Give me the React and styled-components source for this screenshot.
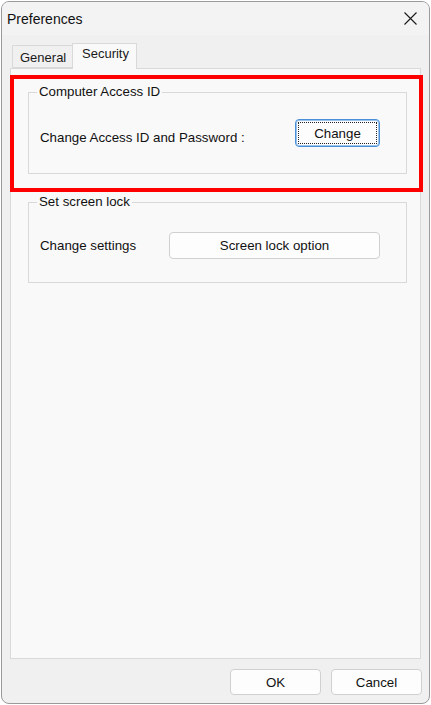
import React from 'react';
import styled, { createGlobalStyle } from 'styled-components';

const App = () => {
    return (
        <>
            <GlobalStyle />
            <Window>
                <TitleBar>
                    <Title>Preferences</Title>
                    <CloseButton aria-label="Close">
                        <svg width="13" height="13" viewBox="0 0 13 13">
                            <path d="M0.5 0.5 L12.5 12.5 M12.5 0.5 L0.5 12.5" stroke="#1a1a1a" strokeWidth="1.1" fill="none" />
                        </svg>
                    </CloseButton>
                </TitleBar>
                <Body>
                    <TabRow>
                        <Tab>General</Tab>
                        <Tab $active>Security</Tab>
                    </TabRow>
                    <Panel>
                        <Highlight>
                            <GroupBox $bottom={26}>
                                <Legend>Computer Access ID</Legend>
                                <Row $top={19}>
                                    <Label $shift={8}>Change Access ID and Password :</Label>
                                    <Button $width={85} $height={28} $focused>
                                        <FocusRing>Change</FocusRing>
                                    </Button>
                                </Row>
                            </GroupBox>
                        </Highlight>
                        <GroupBox $gap={2} $bottom={23}>
                            <Legend>Set screen lock</Legend>
                            <Row $top={22}>
                                <Label>Change settings</Label>
                                <Button $width={211} $height={27}>Screen lock option</Button>
                            </Row>
                        </GroupBox>
                    </Panel>
                    <Footer>
                        <Button $width={91} $height={26}>OK</Button>
                        <Button $width={91} $height={26}>Cancel</Button>
                    </Footer>
                </Body>
            </Window>
        </>
    );
};

export default App;

// Styled components
const GlobalStyle = createGlobalStyle`
    * {
        box-sizing: border-box;
    }
    body {
        margin: 0;
        padding: 1px 0 0 1px;
        background: #ffffff;
        font-family: 'Liberation Sans', Arial, sans-serif;
        color: #000;
    }
`;

const Window = styled.div`
    width: 429px;
    height: 703px;
    border: 1px solid #9a9a9a;
    border-radius: 8px;
    background: #f0f0f0;
    display: flex;
    flex-direction: column;
    overflow: hidden;
`;

const TitleBar = styled.div`
    height: 33px;
    display: flex;
    align-items: center;
    justify-content: space-between;
    padding-left: 5px;
    background: #f3f3f3;
`;

const Title = styled.div`
    font-size: 14px;
    color: #111;
`;

const CloseButton = styled.div`
    width: 38px;
    height: 33px;
    display: flex;
    align-items: center;
    justify-content: center;
`;

const Body = styled.div`
    flex: 1;
    display: flex;
    flex-direction: column;
    padding-top: 8px;
`;

const TabRow = styled.div`
    display: flex;
    align-items: flex-end;
    height: 25px;
    margin-left: 10px;
`;

const Tab = styled.div`
    position: relative;
    z-index: 1;
    height: ${p => (p.$active ? '26px' : '23px')};
    margin-bottom: ${p => (p.$active ? '-1px' : '0')};
    padding: ${p => (p.$active ? '2px 9px 0 9px' : '4px 7px 0 7px')};
    background: ${p => (p.$active ? '#f9f9f9' : '#f0f0f0')};
    border: 1px solid #d9d9d9;
    border-bottom: ${p => (p.$active ? 'none' : '1px solid #d9d9d9')};
    border-right: ${p => (p.$active ? '1px solid #d9d9d9' : 'none')};
    font-size: 13px;
    color: #1a1a1a;
    width: ${p => (p.$active ? '65px' : '60px')};
`;

const Panel = styled.div`
    flex: 1;
    margin: 0 8px;
    background: #f9f9f9;
    border: 1px solid #d9d9d9;
    padding: 6px 13px 0 17px;
`;

const Highlight = styled.div`
    margin: 0 -16px 0 -18px;
    border: 4px solid #ff0000;
    padding: 5px 12px 14px 14px;
`;

const GroupBox = styled.fieldset`
    margin: ${p => p.$gap || 0}px 0 0 0;
    border: 1px solid #d9d9d9;
    padding: 0 26px ${p => p.$bottom}px 11px;
    min-width: 0;
`;

const Legend = styled.legend`
    font-size: 13.3px;
    line-height: 16px;
    padding: 0 2px;
    margin-left: -3px;
    color: #111;
`;

const Row = styled.div`
    display: flex;
    align-items: center;
    justify-content: space-between;
    margin-top: ${p => p.$top}px;
`;

const Label = styled.span`
    font-size: 13.3px;
    color: #111;
    padding-top: ${p => p.$shift || 0}px;
`;

const Button = styled.div`
    width: ${p => p.$width}px;
    height: ${p => p.$height}px;
    display: flex;
    align-items: center;
    justify-content: center;
    background: #fdfdfd;
    border: 1px solid ${p => (p.$focused ? '#4a90d9' : '#d0d0d0')};
    border-radius: 4px;
    font-size: 13.3px;
    color: #111;
    padding: ${p => (p.$focused ? '2px' : '0')};
    box-shadow: ${p => (p.$focused ? 'inset 0 0 0 1px #9cc3ea' : 'none')};
`;

const FocusRing = styled.div`
    width: 100%;
    height: 100%;
    display: flex;
    align-items: center;
    justify-content: center;
    border: 1px dotted #222;
`;

const Footer = styled.div`
    display: flex;
    justify-content: flex-end;
    gap: 10px;
    padding: 10px 7px 8px 0;
`;
